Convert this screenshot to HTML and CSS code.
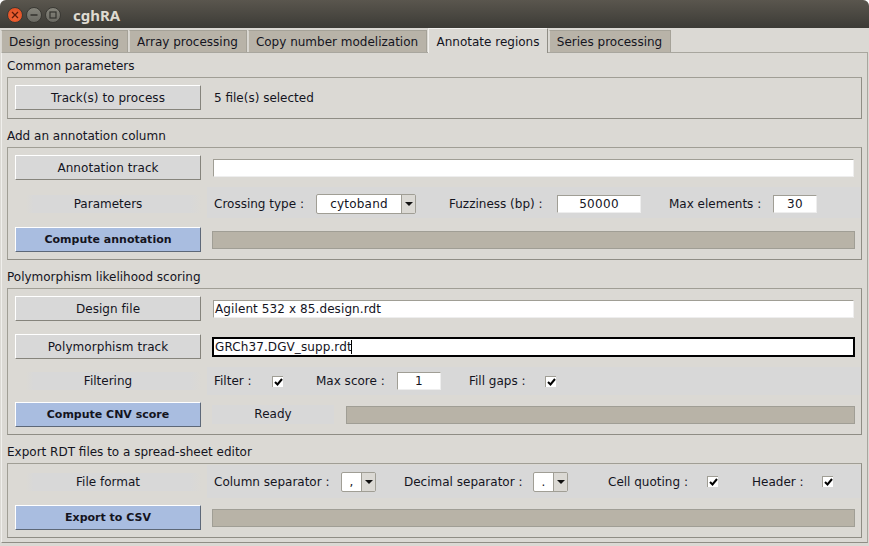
FILE: index.html
```html
<!DOCTYPE html>
<html lang="en">

<head>
    <meta charset="UTF-8">
    <title>cghRA</title>
    <link rel="stylesheet" href="styles.css">
</head>

<body>
    <div class="window">
        <div class="titlebar">
            <span class="wbtn wbtn-close"><svg width="8" height="8" viewBox="0 0 8 8"><path d="M1 1L7 7M7 1L1 7" stroke="#5c1a08" stroke-width="1.3"/></svg></span>
            <span class="wbtn"><svg width="8" height="8" viewBox="0 0 8 8"><path d="M0.5 4H7.5" stroke="#33322e" stroke-width="1.4"/></svg></span>
            <span class="wbtn"><svg width="8" height="8" viewBox="0 0 8 8"><rect x="1" y="1" width="6" height="6" fill="none" stroke="#33322e" stroke-width="1.2"/></svg></span>
            <span class="title">cghRA</span>
        </div>

        <div class="tabs">
            <div class="tab tab-1">Design processing</div>
            <div class="tab tab-2">Array processing</div>
            <div class="tab tab-3">Copy number modelization</div>
            <div class="tab tab-active">Annotate regions</div>
            <div class="tab tab-5">Series processing</div>
        </div>

        <div class="panel">
            <h2 class="legend">Common parameters</h2>
            <div class="box box-common">
                <div class="row row-first">
                    <div class="btn">Track(s) to process</div>
                    <span class="txt">5 file(s) selected</span>
                </div>
            </div>

            <h2 class="legend">Add an annotation column</h2>
            <div class="box">
                <div class="row row-first">
                    <div class="btn">Annotation track</div>
                    <div class="field"></div>
                </div>
                <div class="row row-params">
                    <div class="rowlabel">Parameters</div>
                    <div class="params">
                        <span class="txt w-cross">Crossing type :</span>
                        <div class="combo combo-cross"><span class="combo-val">cytoband</span><span class="combo-arrow"></span></div>
                        <span class="txt w-fuzz">Fuzziness (bp) :</span>
                        <div class="num num-fuzz">50000</div>
                        <span class="txt w-max">Max elements :</span>
                        <div class="num num-max">30</div>
                    </div>
                </div>
                <div class="row row-action">
                    <div class="btn btn-blue">Compute annotation</div>
                    <div class="progress"></div>
                </div>
            </div>

            <h2 class="legend">Polymorphism likelihood scoring</h2>
            <div class="box">
                <div class="row row-first">
                    <div class="btn">Design file</div>
                    <div class="field">Agilent 532 x 85.design.rdt</div>
                </div>
                <div class="row row-second">
                    <div class="btn">Polymorphism track</div>
                    <div class="field field-focus">GRCh37.DGV_supp.rdt<span class="caret"></span></div>
                </div>
                <div class="row row-filter">
                    <div class="rowlabel">Filtering</div>
                    <div class="params">
                        <span class="txt w-filter">Filter :</span>
                        <span class="check"><svg width="9" height="8" viewBox="0 0 9 8"><path d="M1 4L3.5 6.5L8 1" fill="none" stroke="#000" stroke-width="2"/></svg></span>
                        <span class="txt w-score">Max score :</span>
                        <div class="num num-score">1</div>
                        <span class="txt w-gaps">Fill gaps :</span>
                        <span class="check"><svg width="9" height="8" viewBox="0 0 9 8"><path d="M1 4L3.5 6.5L8 1" fill="none" stroke="#000" stroke-width="2"/></svg></span>
                    </div>
                </div>
                <div class="row row-action-2">
                    <div class="btn btn-blue">Compute CNV score</div>
                    <div class="status">Ready</div>
                    <div class="progress"></div>
                </div>
            </div>

            <h2 class="legend">Export RDT files to a spread-sheet editor</h2>
            <div class="box box-export">
                <div class="row row-format">
                    <div class="rowlabel">File format</div>
                    <div class="params">
                        <span class="txt w-col">Column separator :</span>
                        <div class="combo combo-sep"><span class="combo-val">,</span><span class="combo-arrow"></span></div>
                        <span class="txt w-dec">Decimal separator :</span>
                        <div class="combo combo-sep"><span class="combo-val">.</span><span class="combo-arrow"></span></div>
                        <span class="txt w-quote">Cell quoting :</span>
                        <span class="check"><svg width="9" height="8" viewBox="0 0 9 8"><path d="M1 4L3.5 6.5L8 1" fill="none" stroke="#000" stroke-width="2"/></svg></span>
                        <span class="txt w-head">Header :</span>
                        <span class="check"><svg width="9" height="8" viewBox="0 0 9 8"><path d="M1 4L3.5 6.5L8 1" fill="none" stroke="#000" stroke-width="2"/></svg></span>
                    </div>
                </div>
                <div class="row row-action-3">
                    <div class="btn btn-blue">Export to CSV</div>
                    <div class="progress"></div>
                </div>
            </div>
        </div>
    </div>
</body>

</html>
```

FILE: styles.css
```css
* {
    box-sizing: border-box;
}

html,
body {
    margin: 0;
    height: 100%;
    overflow: hidden;
    background: #fff;
}

.window {
    width: 869px;
    height: 546px;
    background: #dbd9d4;
    border-radius: 6px 6px 0 0;
    overflow: hidden;
    font: 12px "DejaVu Sans", sans-serif;
    color: #14141e;
}

/* title bar */
.titlebar {
    height: 28px;
    display: flex;
    align-items: center;
    padding: 2px 0 0 7px;
    gap: 3px;
    background: linear-gradient(#5a564e, #3c3b36);
}

.wbtn {
    width: 16px;
    height: 16px;
    border-radius: 50%;
    display: flex;
    align-items: center;
    justify-content: center;
    background: linear-gradient(#85847b, #6b6a63);
    border: 1px solid #3a3934;
}

.wbtn-close {
    background: radial-gradient(circle at 50% 60%, #f4693a, #d9481d);
}

.title {
    margin-left: 9px;
    font: bold 15px "Noto Sans", sans-serif;
    color: #dfdbd2;
}

/* tabs */
.tabs {
    height: 24px;
    display: flex;
    padding-left: 1px;
    align-items: flex-end;
    position: relative;
}

.tab {
    height: 22px;
    padding: 4px 1px 0 0;
    text-align: center;
    background: #b8b3a8;
    border: 1px solid #a5a298;
    border-bottom: 0;
    border-left-color: #d8d6d0;
    margin-right: 1px;
}

.tab-1 {
    width: 127px;
}

.tab-2 {
    width: 118px;
}

.tab-3 {
    width: 179px;
}

.tab-active {
    width: 120px;
    height: 25px;
    margin-bottom: -1px;
    padding: 6px 0 0;
    background: #dbd9d4;
    position: relative;
    z-index: 1;
    border-color: #f2f1ee;
    border-right-color: #8f8d85;
}

.tab-5 {
    width: 122px;
}

/* main panel */
.panel {
    margin: 0 1px;
    height: 491px;
    padding: 1px 5px 0;
    border: 1px solid #f0efec;
    border-top-color: #a8a69e;
    border-right-color: #a8a69e;
    border-bottom-color: #8f8d85;
}

.legend {
    margin: 0;
    height: 23px;
    line-height: 24px;
    font-size: 12px;
    font-weight: normal;
}

.box {
    width: 855px;
    padding: 0 6px 7px 7px;
    border: 1px solid #a09e95;
    border-right-color: #8f8d85;
    border-bottom-color: #8f8d85;
    margin-bottom: 5px;
}

.box-common {
    padding-bottom: 8px;
}

.box-export {
    margin-bottom: 0;
}

.row {
    display: flex;
    align-items: center;
}

.row-first {
    margin-top: 7px;
    height: 25px;
}

.row-second {
    margin-top: 13px;
    height: 25px;
}

.row-params {
    margin-top: 7px;
    height: 31px;
}

.row-params .rowlabel {
    margin-top: 2px;
}

.row-params .params {
    padding-top: 2px;
}

.row-filter {
    margin-top: 8px;
    height: 28px;
}

.row-format {
    margin-top: 1px;
    height: 33px;
}

.row-action,
.row-action-2,
.row-action-3 {
    height: 25px;
    margin-top: 9px;
}

.row-action-2,
.row-action-3 {
    margin-top: 7px;
}

/* widgets */
.btn {
    flex: none;
    width: 186px;
    height: 25px;
    line-height: 24px;
    text-align: center;
    background: #d8d8d8;
    border: 1px solid #fff;
    border-right-color: #86847c;
    border-bottom-color: #86847c;
    margin-right: 12px;
    letter-spacing: 0.06px;
}

.btn-blue {
    background: #a9bde0;
    font-size: 11px;
    font-weight: bold;
    letter-spacing: 0;
    border-right-color: #5d6878;
    border-bottom-color: #5d6878;
}

.txt {
    flex: none;
    padding-left: 1px;
}

.field {
    flex: 1;
    margin-right: 1px;
    height: 18px;
    line-height: 17px;
    padding-left: 1px;
    letter-spacing: 0.1px;
    background: #fff;
    border: 1px solid #a09e95;
    border-right-color: #eee;
    border-bottom-color: #eee;
    position: relative;
}

.field-focus {
    margin-right: 0;
    height: 20px;
    line-height: 17px;
    border: 2px solid #000;
    margin-left: -1px;
    padding-left: 1px;
}

.caret {
    position: absolute;
    top: 1px;
    margin-left: -1px;
    width: 1px;
    height: 14px;
    background: #000;
}

.rowlabel {
    flex: none;
    width: 186px;
    height: 18px;
    line-height: 18px;
    text-align: center;
    margin-right: 6px;
    background: linear-gradient(90deg, #dbd9d4 6%, #d8d8d8 10%, #d8d8d8 94%, #dbd9d4);
}

.params {
    flex: none;
    width: 654px;
    height: 100%;
    margin-right: -6px;
    padding-left: 6px;
    display: flex;
    align-items: center;
    background: #d8d8d8;
}

.combo {
    flex: none;
    height: 20px;
    display: flex;
    background: #fff;
    border: 1px solid #a09e95;
    border-radius: 2px;
}

.combo-cross {
    width: 100px;
}

.combo-sep {
    width: 35px;
}

.combo-val {
    flex: 1;
    text-align: center;
    line-height: 18px;
    letter-spacing: 0.2px;
}

.combo-arrow {
    flex: none;
    width: 14px;
    background: #dbd9d4;
    border-left: 1px solid #a09e95;
    position: relative;
}

.combo-arrow::after {
    content: "";
    position: absolute;
    left: 3px;
    top: 7px;
    border: 4px solid transparent;
    border-top: 4px solid #111;
    border-bottom: 0;
}

.num {
    flex: none;
    height: 18px;
    line-height: 17px;
    text-align: center;
    letter-spacing: 0.3px;
    background: #fff;
    border: 1px solid #a09e95;
    border-right-color: #eee;
    border-bottom-color: #eee;
}

.num-fuzz {
    width: 84px;
}

.num-max {
    width: 44px;
}

.num-score {
    width: 44px;
}

.check {
    flex: none;
    width: 11px;
    height: 11px;
    display: flex;
    align-items: center;
    justify-content: center;
    background: #fff;
    border: 1px solid #a09e95;
    border-right: 0;
    border-bottom: 0;
}

.w-cross {
    width: 103px;
}

.w-fuzz {
    width: 109px;
    margin-left: 32px;
}

.w-max {
    width: 105px;
    margin-left: 27px;
}

.w-filter {
    width: 59px;
}

.w-score {
    width: 82px;
    margin-left: 32px;
}

.w-gaps {
    width: 77px;
    margin-left: 27px;
}

.w-col {
    width: 128px;
}

.w-dec {
    width: 130px;
    margin-left: 27px;
}

.w-quote {
    width: 100px;
    margin-left: 39px;
}

.w-head {
    width: 71px;
    margin-left: 33px;
}

.status {
    flex: none;
    width: 122px;
    height: 19px;
    line-height: 18px;
    text-align: center;
    background: #d8d8d8;
    margin-left: -1px;
    margin-right: 12px;
}

.progress {
    flex: 1;
    height: 18px;
    margin-left: -1px;
    background: #b8b3a7;
    border: 1px solid #a09e95;
}

.status + .progress {
    margin-left: 0;
}
```
